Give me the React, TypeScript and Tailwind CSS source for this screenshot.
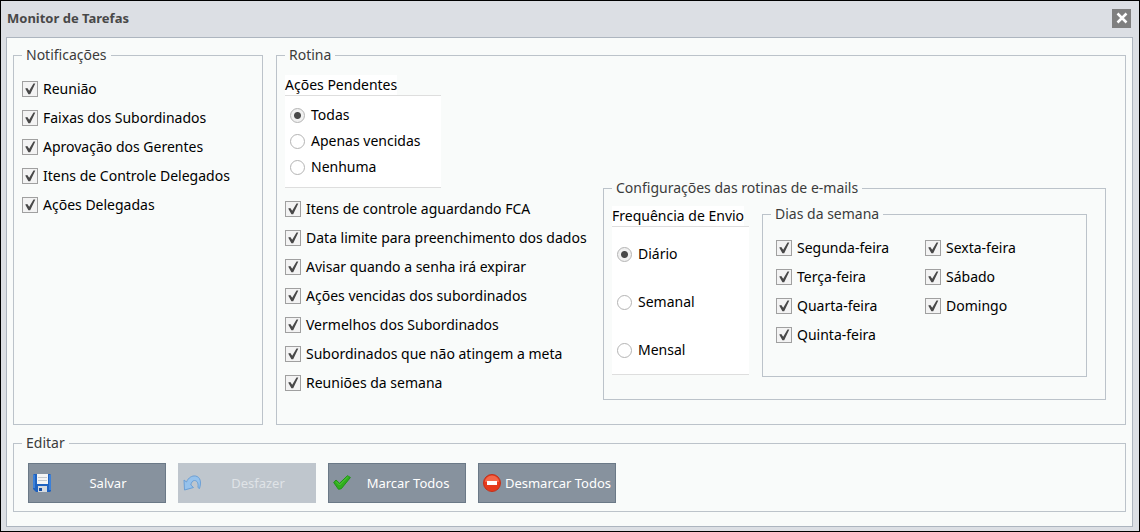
import { type ReactNode } from 'react'
import { clsx } from 'clsx'

const notifications = [
  'Reunião',
  'Faixas dos Subordinados',
  'Aprovação dos Gerentes',
  'Itens de Controle Delegados',
  'Ações Delegadas',
]

const routines = [
  'Itens de controle aguardando FCA',
  'Data limite para preenchimento dos dados',
  'Avisar quando a senha irá expirar',
  'Ações vencidas dos subordinados',
  'Vermelhos dos Subordinados',
  'Subordinados que não atingem a meta',
  'Reuniões da semana',
]

const pendingOptions = ['Todas', 'Apenas vencidas', 'Nenhuma']
const frequencyOptions = ['Diário', 'Semanal', 'Mensal']
const weekdays = ['Segunda-feira', 'Terça-feira', 'Quarta-feira', 'Quinta-feira']
const weekend = ['Sexta-feira', 'Sábado', 'Domingo']

function Group({
  title,
  className,
  children,
}: {
  title: string
  className?: string
  children: ReactNode
}) {
  return (
    <fieldset className={clsx('min-w-0 border border-[#bcc3ca] px-2', className)}>
      <legend className="px-1 leading-5 text-[#3c3c3c]">{title}</legend>
      {children}
    </fieldset>
  )
}

function CheckItem({ label }: { label: string }) {
  return (
    <label className="flex h-[29px] items-center gap-[5px] whitespace-nowrap">
      <span className="grid h-4 w-4 shrink-0">
        <input
          type="checkbox"
          defaultChecked
          className="peer col-start-1 row-start-1 h-4 w-4 appearance-none border border-[#a0a0a0] bg-[#f3f3f3]"
        />
        <svg
          viewBox="0 0 16 16"
          className="pointer-events-none invisible col-start-1 row-start-1 h-4 w-4 peer-checked:visible"
          aria-hidden="true"
        >
          <path d="M3.2 7.4 5.3 7 7.2 9.8 11.5 2.6 13.3 2.6 8.2 13.2 6.4 13.2Z" fill="#484848" />
        </svg>
      </span>
      {label}
    </label>
  )
}

function RadioItem({
  name,
  label,
  checked,
}: {
  name: string
  label: string
  checked: boolean
}) {
  return (
    <label className="flex items-center gap-[6px] whitespace-nowrap">
      <input
        type="radio"
        name={name}
        defaultChecked={checked}
        className="h-[15px] w-[15px] shrink-0 appearance-none rounded-full border border-[#b4b4b4] bg-white checked:bg-[radial-gradient(circle,#484848_3px,#f0f0f0_4px)]"
      />
      {label}
    </label>
  )
}

function CheckList({ items, className }: { items: string[]; className?: string }) {
  return (
    <div className={className}>
      {items.map((item) => (
        <CheckItem key={item} label={item} />
      ))}
    </div>
  )
}

function ActionButton({
  label,
  icon,
  disabled,
}: {
  label: string
  icon: ReactNode
  disabled?: boolean
}) {
  return (
    <button
      type="button"
      disabled={disabled}
      className="flex h-10 w-[138px] items-center border border-[#6b7987] bg-[#87929e] pl-1 text-[13px] text-white disabled:border-[#bfc6cd] disabled:bg-[#bfc6cd] disabled:text-[#dfe3e7]"
    >
      {icon}
      <span className="flex-1 whitespace-nowrap pt-px text-center">{label}</span>
    </button>
  )
}

function SaveIcon() {
  return (
    <svg viewBox="0 0 18 18" className="h-[18px] w-[18px] shrink-0" aria-hidden="true">
      <path d="M1 0h16l1 1v16l-1 1H3l-3-3V1z" fill="#1f62c0" />
      <path d="M0 1h2v13H0zM16 1h2v15h-2z" fill="#3c80d8" />
      <path d="M4 0h11v10H4z" fill="#f4f4f4" />
      <path d="M5 3h9v1H5zM5 6h9v1H5z" fill="#c4c8cc" />
      <path d="M5 12h9v6H5z" fill="#d5dae0" />
      <path d="M6 14h3v3H6z" fill="#1b4f9f" />
    </svg>
  )
}

function UndoIcon() {
  return (
    <svg viewBox="0 0 18 18" className="h-[18px] w-[18px] shrink-0" aria-hidden="true">
      <path
        d="M1 6 3.5 8C5.5 3.5 9 1.5 12.5 2 17.5 3 18.5 8 16.5 14.5 15.5 14.5 15.5 14 15 13 15.5 9 14 6.5 11.5 6.5 9.5 6.5 8.3 8.5 7.8 11L10.5 13.5 1.5 16Z"
        fill="#96c2ec"
        stroke="#6a9fd6"
        strokeLinejoin="round"
      />
    </svg>
  )
}

function MarkIcon() {
  return (
    <svg viewBox="0 0 18 18" className="h-[18px] w-[18px] shrink-0" aria-hidden="true">
      <path
        d="M.7 8.5 3 6 6.5 9.3 14.5 1.7 17.4 3.5 8.3 14.7 5.5 15.3Z"
        fill="#2fae1d"
        stroke="#1f9414"
        strokeLinejoin="round"
      />
      <path d="M3 7.5 6.5 11 15 2.5" fill="none" stroke="#55c63c" />
    </svg>
  )
}

function UnmarkIcon() {
  return (
    <svg viewBox="0 0 18 18" className="h-[18px] w-[18px] shrink-0" aria-hidden="true">
      <circle cx="9" cy="9" r="8.5" fill="#e63a1c" stroke="#c4301a" />
      <path d="M2 8a7 6.5 0 0 1 14 0z" fill="#f4674a" />
      <path d="M4 7h10v4H4z" fill="#fff" />
    </svg>
  )
}

export default function App() {
  return (
    <div className="flex min-h-screen flex-col border border-black bg-[#dcdfe4] pl-[5px] pr-[6px] pb-1 font-['Noto_Sans','Segoe_UI',sans-serif] text-sm text-black">
      <header className="flex h-9 items-center justify-between pb-[2px] pr-[2px]">
        <h1 className="pl-px text-[13px] font-bold text-[#484848]">Monitor de Tarefas</h1>
        <button
          type="button"
          aria-label="Fechar"
          className="flex h-[19px] w-[19px] items-center justify-center bg-[#7f7f7f]"
        >
          <svg viewBox="0 0 12 12" className="h-3 w-3" aria-hidden="true">
            <path d="M1.5 1.5 10.5 10.5M10.5 1.5 1.5 10.5" stroke="#fff" strokeWidth="2.5" />
          </svg>
        </button>
      </header>

      <main className="flex flex-1 flex-col gap-2 border border-[#adb5bf] bg-[#f9fbfa] px-[6px] pt-[7px] pb-[14px]">
        <div className="flex flex-1 gap-[13px]">
          <Group title="Notificações" className="w-[250px] shrink-0">
            <CheckList items={notifications} className="pt-[9px]" />
          </Group>

          <Group title="Rotina" className="flex-1">
            <div className="flex justify-between pt-[10px]">
              <div className="shrink-0">
                <div role="radiogroup" aria-labelledby="pending-title" className="w-[156px]">
                  <div className="flex border-b border-[#dedede]">
                    <span id="pending-title" className="bg-white leading-5">
                      Ações Pendentes
                    </span>
                  </div>
                  <div className="flex flex-col gap-[6px] border-b border-[#dedede] bg-white pt-[9px] pb-[10px] pl-[5px] leading-5">
                    {pendingOptions.map((option, i) => (
                      <RadioItem key={option} name="pending" label={option} checked={i === 0} />
                    ))}
                  </div>
                </div>
                <CheckList items={routines} className="pt-[6px]" />
              </div>

              <Group title="Configurações das rotinas de e-mails" className="mr-[11px] mt-[103px] w-[503px] self-start pb-[22px]">
                <div className="flex gap-[13px]">
                  <div role="radiogroup" aria-labelledby="frequency-title" className="w-[137px] shrink-0 pt-2 pb-[2px]">
                    <div className="flex border-b border-[#dedede]">
                      <span id="frequency-title" className="bg-white leading-5">
                        Frequência de Envio
                      </span>
                    </div>
                    <div className="flex flex-col gap-7 border-b border-[#dedede] bg-white pt-[17px] pb-[14px] pl-[5px] leading-5">
                      {frequencyOptions.map((option, i) => (
                        <RadioItem key={option} name="frequency" label={option} checked={i === 0} />
                      ))}
                    </div>
                  </div>
                  <Group title="Dias da semana" className="mr-[10px] mt-[6px] flex-1">
                    <div className="grid grid-cols-[149px_auto] pl-[5px] pt-[9px]">
                      <CheckList items={weekdays} />
                      <CheckList items={weekend} />
                    </div>
                  </Group>
                </div>
              </Group>
            </div>
          </Group>
        </div>

        <Group title="Editar" className="pb-2">
          <div className="flex gap-3 pl-[6px] pt-[10px]">
            <ActionButton label="Salvar" icon={<SaveIcon />} />
            <ActionButton label="Desfazer" icon={<UndoIcon />} disabled />
            <ActionButton label="Marcar Todos" icon={<MarkIcon />} />
            <ActionButton label="Desmarcar Todos" icon={<UnmarkIcon />} />
          </div>
        </Group>
      </main>
    </div>
  )
}
